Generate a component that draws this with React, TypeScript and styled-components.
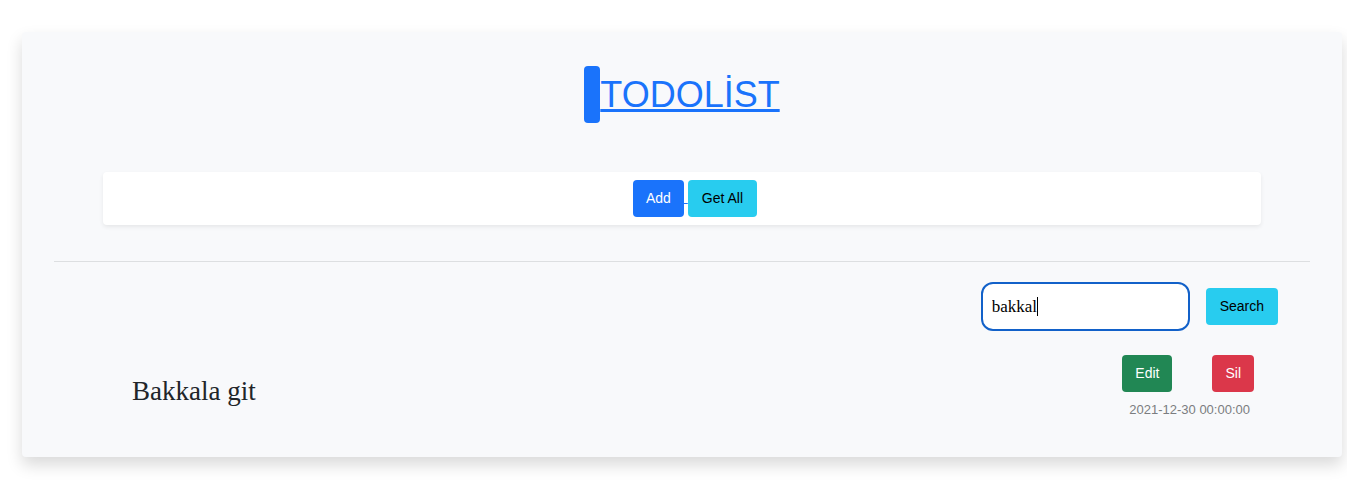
import React, { useState } from "react";
import styled, { createGlobalStyle } from "styled-components";

const GlobalStyle = createGlobalStyle`
  * { box-sizing: border-box; }
  body {
    margin: 0;
    background: #fff;
    color: #212529;
    font-family: "Liberation Sans", Arial, sans-serif;
  }
`;

const Page = styled.div`
  padding: 32px 5px 30px 22px;
  overflow: hidden;
`;

const Card = styled.main`
  padding: 34px 32px 38px;
  background: #f8f9fb;
  border-radius: 4px;
  box-shadow: 0 8px 16px rgba(0, 0, 0, 0.15);
`;

const Title = styled.h1`
  display: flex;
  justify-content: center;
  margin: 0 0 49px;
  font-size: 36px;
  font-weight: 400;
  line-height: 57px;
`;

const TitleMark = styled.span`
  width: 16px;
  background: #1a73fb;
  border-radius: 4px;
`;

const TitleLink = styled.a`
  color: #1a73fb;
  text-decoration: underline;
  text-decoration-thickness: 3px;
  text-underline-offset: 2px;
`;

const ActionPanel = styled.nav`
  margin: 0 49px 36px;
  padding: 8px 0 8px 26px;
  display: flex;
  justify-content: center;
  background: #fff;
  border-radius: 4px;
  box-shadow: 0 2px 4px rgba(0, 0, 0, 0.075);
`;

const GapLink = styled.a`
  color: #1a73fb;
  font-size: 14px;
  line-height: 35px;
  white-space: pre;
`;

const tones = {
  primary: { background: "#1a73fb", color: "#fff", padding: "0 13px 2px" },
  info: { background: "#28ccef", color: "#000", padding: "0 14px 2px" },
  success: { background: "#218754", color: "#fff", padding: "0 13px 2px" },
  danger: { background: "#db374a", color: "#fff", padding: "0 13px 2px" },
};

const Button = styled.button<{ $tone: keyof typeof tones }>`
  height: 37px;
  padding: ${({ $tone }) => tones[$tone].padding};
  border: 0;
  border-radius: 4px;
  background: ${({ $tone }) => tones[$tone].background};
  color: ${({ $tone }) => tones[$tone].color};
  font: 14px "Liberation Sans", Arial, sans-serif;
  cursor: pointer;
`;

const Divider = styled.hr`
  height: 1px;
  margin: 0;
  border: 0;
  background: #dddfe1;
`;

const SearchForm = styled.form`
  display: flex;
  align-items: center;
  justify-content: flex-end;
  gap: 16px;
  padding: 20px 32px 24px;
`;

const SearchField = styled.label`
  position: relative;
  display: flex;
`;

const SearchInput = styled.input`
  width: 209px;
  height: 49px;
  padding: 0 9px;
  border: 2px solid #1261c9;
  border-radius: 12px;
  outline: 0;
  background: #fff;
  color: #000;
  font: 17px "Liberation Serif", "Times New Roman", serif;
`;

const Caret = styled.span`
  position: absolute;
  top: 15px;
  left: 11px;
  height: 19px;
  border-right: 1px solid #000;
  color: transparent;
  font: 17px "Liberation Serif", "Times New Roman", serif;
  white-space: pre;
  pointer-events: none;
`;

const List = styled.ul`
  margin: 0;
  padding: 0 56px 0 78px;
  list-style: none;
`;

const Item = styled.li`
  display: flex;
  align-items: center;
  justify-content: space-between;
`;

const ItemTitle = styled.h2`
  margin: 8px 0 0;
  font: 27px "Liberation Serif", "Times New Roman", serif;
`;

const ItemSide = styled.div`
  display: flex;
  flex-direction: column;
  align-items: flex-end;
  gap: 8px;
`;

const ItemActions = styled.div`
  display: flex;
  gap: 40px;
`;

const ItemDate = styled.time`
  padding-right: 4px;
  color: #7b7d80;
  font-size: 13px;
  line-height: 19px;
`;

const todos = [{ id: 1, title: "Bakkala git", date: "2021-12-30 00:00:00" }];

export default function App() {
  const [query, setQuery] = useState("bakkal");

  return (
    <>
      <GlobalStyle />
      <Page>
        <Card>
          <Title>
            <TitleMark />
            <TitleLink href="#">TODOLİST</TitleLink>
          </Title>
          <ActionPanel>
            <Button $tone="primary" type="button">Add</Button>
            <GapLink href="#" aria-label="Add"> </GapLink>
            <Button $tone="info" type="button">Get All</Button>
          </ActionPanel>
          <Divider />
          <SearchForm onSubmit={(e) => e.preventDefault()}>
            <SearchField>
              <SearchInput
                type="text"
                aria-label="Search"
                value={query}
                onChange={(e) => setQuery(e.target.value)}
              />
              <Caret aria-hidden="true">{query}</Caret>
            </SearchField>
            <Button $tone="info" type="submit">Search</Button>
          </SearchForm>
          <List>
            {todos.map((todo) => (
              <Item key={todo.id}>
                <ItemTitle>{todo.title}</ItemTitle>
                <ItemSide>
                  <ItemActions>
                    <Button $tone="success" type="button">Edit</Button>
                    <Button $tone="danger" type="button">Sil</Button>
                  </ItemActions>
                  <ItemDate>{todo.date}</ItemDate>
                </ItemSide>
              </Item>
            ))}
          </List>
        </Card>
      </Page>
    </>
  );
}
